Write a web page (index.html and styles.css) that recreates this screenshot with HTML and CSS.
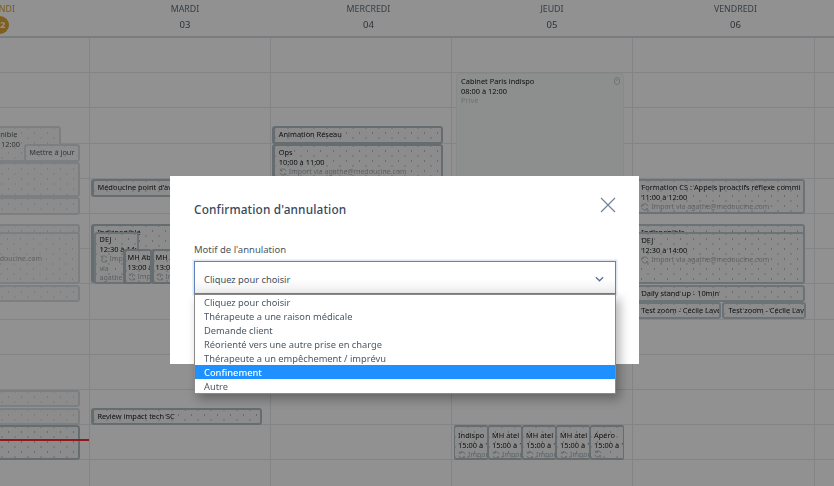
FILE: index.html
```html
<!DOCTYPE html>
<html lang="fr">
  <head>
    <meta charset="UTF-8" />
    <title>Agenda</title>
    <link rel="stylesheet" href="styles.css">
  </head>
  <body>
    <svg class="defs" width="0" height="0">
      <symbol id="sync" viewBox="0 0 10 10">
        <path d="M2 2.4A4 4 0 0 1 8.8 4M8 7.6A4 4 0 0 1 1.2 6" fill="none" stroke="currentColor" />
        <path d="M1.6 0.8V3H3.8M8.4 9.2V7H6.2" fill="none" stroke="currentColor" stroke-width="0.8" />
      </symbol>
    </svg>

    <div class="calendar">
      <div class="day-heads">
        <div class="day-head today"><span>LUNDI</span><b>02</b></div>
        <div class="day-head"><span>MARDI</span><b>03</b></div>
        <div class="day-head"><span>MERCREDI</span><b>04</b></div>
        <div class="day-head"><span>JEUDI</span><b>05</b></div>
        <div class="day-head"><span>VENDREDI</span><b>06</b></div>
      </div>
      <div class="days">
        <!-- lundi -->
        <div class="day">
          <div class="event pale ev-dispo"><p>Indisponible</p><p>11:00 à 12:00</p><p class="dim">Privé</p></div>
          <div class="event pale ev-maj"><p>Mettre à jour</p></div>
          <div class="event pale ev-l1"></div>
          <div class="event pale ev-l2"></div>
          <div class="event pale ev-l3"></div>
          <div class="event pale ev-l4"><p class="import">Import via agathe@medoucine.com</p></div>
          <div class="event pale ev-l5"></div>
          <div class="event pale ev-l6"></div>
          <div class="event pale ev-l7"></div>
          <div class="event ev-l8"></div>
          <div class="now-line"></div>
        </div>
        <!-- mardi -->
        <div class="day">
          <div class="event bar ev-point"><p>Médoucine point d'avancement</p></div>
          <div class="event bar ev-indispo"><p>Indisponible</p></div>
          <div class="event ev-dej">
            <p>DEJ</p><p>12:30 à 14:00</p>
            <p class="import"><svg class="sync"><use href="#sync" /></svg>Impo</p>
            <p class="import">via</p>
            <p class="import">agathe</p>
          </div>
          <div class="event bar ev-mh1">
            <p>MH Ab</p><p>13:00 à</p>
            <p class="import"><svg class="sync"><use href="#sync" /></svg>Impo</p>
          </div>
          <div class="event bar ev-mh2">
            <p>MH Ab</p><p>13:00 à</p>
            <p class="import"><svg class="sync"><use href="#sync" /></svg>Impo</p>
          </div>
          <div class="event bar ev-review"><p>Review impact tech SC</p></div>
        </div>
        <!-- mercredi -->
        <div class="day">
          <div class="event bar ev-anim"><p>Animation Réseau</p></div>
          <div class="event bar ev-ops">
            <p>Ops</p><p>10:00 à 11:00</p>
            <p class="import"><svg class="sync"><use href="#sync" /></svg>Import via agathe@medoucine.com</p>
          </div>
        </div>
        <!-- jeudi -->
        <div class="day">
          <div class="event plain ev-cabinet">
            <p>Cabinet Paris indispo</p><p>08:00 à 12:00</p><p class="dim">Privé</p>
            <svg class="lock" viewBox="0 0 6 8"><rect x="0.5" y="0.5" width="5" height="7" rx="2.5" fill="none" stroke="currentColor" /><path d="M3 2V4" stroke="currentColor" /></svg>
          </div>
          <div class="small-row">
            <div class="event tiny"><p>Indispo</p><p>15:00 à 16</p><p class="import"><svg class="sync"><use href="#sync" /></svg>Import</p></div>
            <div class="event tiny"><p>MH atel</p><p>15:00 à 16</p><p class="import"><svg class="sync"><use href="#sync" /></svg>Import</p></div>
            <div class="event tiny"><p>MH atel</p><p>15:00 à 16</p><p class="import"><svg class="sync"><use href="#sync" /></svg>Import</p></div>
            <div class="event tiny"><p>MH atel</p><p>15:00 à 16</p><p class="import"><svg class="sync"><use href="#sync" /></svg>Import</p></div>
            <div class="event tiny"><p>Apéro</p><p>15:00 à 16</p><p class="import"><svg class="sync"><use href="#sync" /></svg></p></div>
          </div>
        </div>
        <!-- vendredi -->
        <div class="day">
          <div class="event ev-form">
            <p>Formation CS : Appels proactifs réflexe commi</p><p>11:00 à 12:00</p>
            <p class="import"><svg class="sync"><use href="#sync" /></svg>Import via agathe@medoucine.com</p>
          </div>
          <div class="event ev-v-indispo"><p>Indisponible</p></div>
          <div class="event ev-v-dej">
            <p>DEJ</p><p>12:30 à 14:00</p>
            <p class="import"><svg class="sync"><use href="#sync" /></svg>Import via agathe@medoucine.com</p>
          </div>
          <div class="event ev-daily"><p>Daily stand up - 10min</p></div>
          <div class="event ev-zoom1"><p>Test zoom - Cécile Lavergne</p></div>
          <div class="event ev-zoom2"><p>Test zoom - Cécile Lavergne</p></div>
        </div>
        <div class="day"></div>
      </div>
    </div>

    <div class="overlay">
      <div class="modal">
        <div class="modal-head">
          <h2>Confirmation d'annulation</h2>
          <svg class="close" viewBox="0 0 16 16">
            <path d="M1 1L15 15M15 1L1 15" fill="none" stroke="currentColor" stroke-width="1.2" />
          </svg>
        </div>
        <label class="field-label">Motif de l'annulation</label>
        <div class="select">
          <span>Cliquez pour choisir</span>
          <svg class="chevron" viewBox="0 0 10 6">
            <path d="M1 1L5 5L9 1" fill="none" stroke="currentColor" stroke-width="1.4" />
          </svg>
          <ul class="options">
            <li>Cliquez pour choisir</li>
            <li>Thérapeute a une raison médicale</li>
            <li>Demande client</li>
            <li>Réorienté vers une autre prise en charge</li>
            <li>Thérapeute a un empêchement / imprévu</li>
            <li class="active">Confinement</li>
            <li>Autre</li>
          </ul>
        </div>
      </div>
    </div>
  </body>
</html>
```

FILE: styles.css
```css
* {
  box-sizing: border-box;
}
html,
body {
  margin: 0;
  height: 100%;
  overflow: hidden;
  background: #fff;
  font-family: "Noto Sans", sans-serif;
}
.defs {
  display: block;
  height: 0;
}
p {
  margin: 0;
}

/* calendar, the first day starts off screen */
.calendar {
  width: 1090px;
  height: 486px;
  margin-left: -91.8px;
  filter: blur(0.5px);
}
.day-heads {
  display: flex;
  height: 38px;
  padding-left: 1.5px;
  border-bottom: 2px solid #d6dbdf;
}
.day-head {
  width: 183.5px;
  text-align: center;
  color: #4b5a68;
  padding-top: 3px;
}
.day-head span {
  display: block;
  font-size: 8.8px;
  line-height: 13px;
  color: #5f6c78;
}
.day-head b {
  display: block;
  font-size: 9.5px;
  font-weight: 400;
  line-height: 14px;
  margin-top: 2px;
}
.today span {
  color: #d8a23a;
}
.today b {
  width: 18px;
  height: 18px;
  line-height: 18px;
  margin: 0 auto;
  position: relative;
  left: -1.5px;
  border-radius: 50%;
  background: #e0a636;
  color: #fff;
  font-weight: 700;
}
.days {
  display: flex;
  height: 448px;
}
.day {
  position: relative;
  width: 181.3px;
  border-right: 1px solid #e6e9eb;
  background: repeating-linear-gradient(
    to bottom,
    transparent 0,
    transparent 34.2px,
    #e6e9eb 34.2px,
    #e6e9eb 35.2px
  );
}

/* events sit on the time grid */
.event {
  position: absolute;
  padding: 2px 4px;
  font-size: 7.4px;
  line-height: 9.6px;
  color: #14181b;
  white-space: nowrap;
  overflow: hidden;
  border: 2px solid #bfcad0;
  border-radius: 3px;
  background-color: #f7f7f7;
  background-image: radial-gradient(#5f676b 0.5px, transparent 0.75px),
    radial-gradient(#5f676b 0.5px, transparent 0.75px);
  background-size: 13px 10px;
  background-position: 0 0, 6.5px 5px;
}
.bar {
  border-left-width: 3px;
  border-color: #b4c0c7;
}
.pale {
  border-color: #d9e0e3;
  background-image: radial-gradient(#a9aeb1 0.5px, transparent 0.75px),
    radial-gradient(#a9aeb1 0.5px, transparent 0.75px);
  color: #5a6064;
}
.plain {
  background-image: none;
  border: 1px solid #f0f2f3;
  background-color: #f8f9f9;
}
.dim {
  color: #c4c8ca;
}
.import {
  display: flex;
  align-items: center;
  gap: 2px;
  color: #a5abaf;
  font-size: 7px;
}
.sync {
  flex: none;
  width: 8px;
  height: 8px;
  color: #a5abaf;
}
.lock {
  position: absolute;
  top: 3px;
  right: 3px;
  width: 6px;
  height: 8px;
  color: #c5cacd;
}
.now-line {
  position: absolute;
  top: 400.5px;
  left: 92px;
  width: 89px;
  height: 2px;
  background: #ff2a32;
}

/* lundi */
.ev-dispo { left: 40px; top: 88px; width: 113px; height: 36px; padding-left: 24px; }
.ev-maj { left: 116px; top: 106px; width: 56px; height: 18px; padding: 2px 3px; background-color: #f9f9f9; }
.ev-l1 { left: 40px; top: 124px; width: 132px; height: 35px; }
.ev-l2 { left: 40px; top: 159px; width: 132px; height: 18px; }
.ev-l3 { left: 40px; top: 186px; width: 132px; height: 10px; }
.ev-l4 { left: 0; top: 194px; width: 172px; height: 52px; padding: 20px 0 0 14px; }
.ev-l5 { left: 40px; top: 247px; width: 132px; height: 17px; }
.ev-l6 { left: 40px; top: 352px; width: 132px; height: 17px; }
.ev-l7 { left: 40px; top: 370px; width: 132px; height: 17px; }
.ev-l8 { left: 40px; top: 387px; width: 132px; height: 35px; border-color: #b4c0c7; }

/* mardi */
.ev-point { left: 1px; top: 141px; width: 171px; height: 18px; }
.ev-indispo { left: 1px; top: 186px; width: 171px; height: 59px; }
.ev-dej { left: 4px; top: 194px; width: 45px; height: 52px; padding-top: 1px; }
.ev-mh1 { left: 33px; top: 211px; width: 29px; height: 35px; padding-left: 2px; }
.ev-mh2 { left: 61px; top: 211px; width: 29px; height: 35px; padding-left: 2px; }
.ev-review { left: 1px; top: 370px; width: 171px; height: 17px; }

/* mercredi */
.ev-anim { left: 1px; top: 88px; width: 171px; height: 18px; }
.ev-ops { left: 1px; top: 106px; width: 171px; height: 53px; }

/* jeudi */
.ev-cabinet { left: 4px; top: 35px; width: 168px; height: 141px; padding: 3px 4px; }
.small-row {
  position: absolute;
  left: 2px;
  top: 387px;
  width: 170px;
  height: 35px;
  display: flex;
}
.tiny {
  position: static;
  flex: 1;
  min-width: 0;
  padding: 4px 1px 0 3px;
  border-radius: 2px;
  border-color: #b4c0c7;
  border-width: 2px 1px;
}

/* vendredi */
.ev-form { left: 0; top: 141px; width: 172px; height: 35px; padding-left: 6px; }
.ev-v-indispo { left: 0; top: 186px; width: 172px; height: 18px; padding-left: 6px; }
.ev-v-dej { left: 0; top: 194px; width: 172px; height: 52px; padding-left: 6px; }
.ev-daily { left: 0; top: 247px; width: 172px; height: 17px; padding-left: 6px; }
.ev-zoom1 { left: 0; top: 264px; width: 88px; height: 17px; padding-left: 6px; }
.ev-zoom2 { left: 89px; top: 264px; width: 84px; height: 17px; padding-left: 4px; }

/* modal */
.overlay {
  position: fixed;
  inset: 0;
  padding: 176px 0 0 170px;
  background: rgba(0, 0, 0, 0.43);
}
.modal {
  width: 469px;
  height: 188px;
  padding: 21px 24px 0;
  background: #fff;
  color: #3d4f63;
  filter: blur(0.25px);
}
.modal-head {
  display: flex;
  justify-content: space-between;
  align-items: flex-start;
  height: 46px;
}
.modal-head h2 {
  margin: 4px 0 0;
  font-size: 11.8px;
  line-height: 16px;
  font-weight: 500;
  color: #34495e;
  letter-spacing: 0.15px;
}
.close {
  width: 16px;
  height: 16px;
  margin-right: -1px;
  color: #6f819b;
}
.field-label {
  display: block;
  font-size: 9.5px;
  line-height: 13px;
  color: #4b5560;
}
.select {
  position: relative;
  display: flex;
  align-items: center;
  justify-content: space-between;
  width: 422px;
  height: 33px;
  margin-top: 5px;
  padding: 3px 11px 0 9px;
  font-size: 9.3px;
  border: 1px solid #5f84bb;
  box-shadow: 0 0 0 1.5px #dfe6ef;
  background: linear-gradient(to bottom, #fff 55%, #eee);
}
.chevron {
  width: 9px;
  height: 6px;
  color: #5b6f8c;
}
.options {
  position: absolute;
  top: 32px;
  left: -1px;
  width: 422px;
  margin: 0;
  padding: 0;
  list-style: none;
  background: #fff;
  border: 1px solid #8a8a8a;
  box-shadow: 4px 5px 10px rgba(0, 0, 0, 0.3);
  color: #4a5866;
}
.options li {
  height: 14px;
  line-height: 15px;
  padding-left: 9px;
}
.options .active {
  background: #1e90ff;
  color: #fff;
  font-weight: 500;
}
```
